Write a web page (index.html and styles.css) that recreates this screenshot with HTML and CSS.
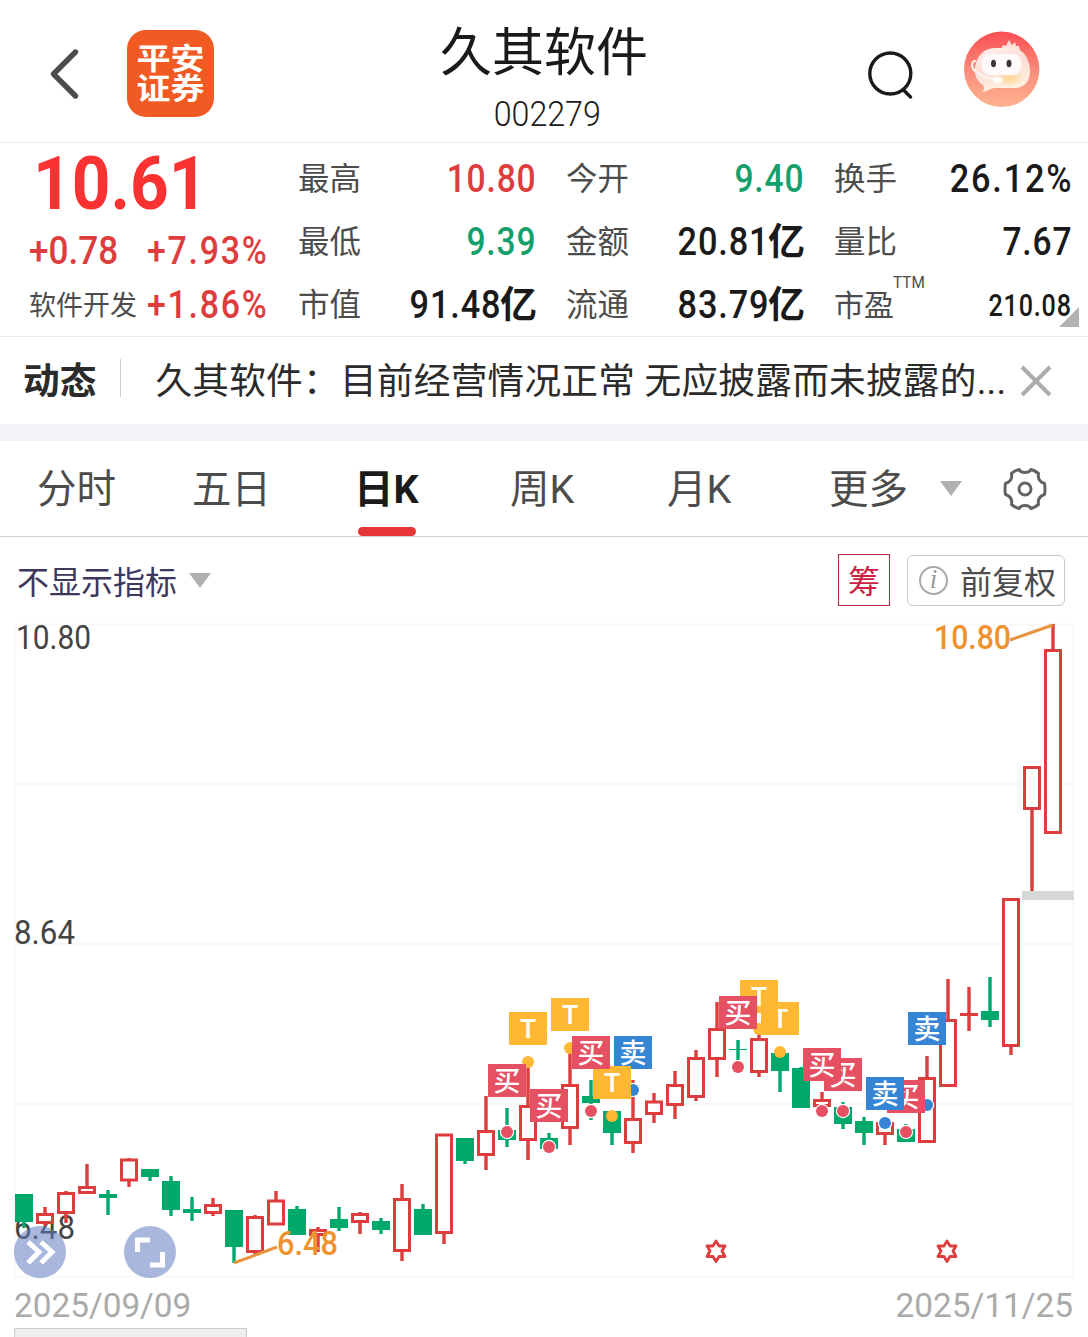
FILE: index.html
```html
<!DOCTYPE html>
<html lang="zh-CN">
<head>
    <meta charset="UTF-8">
    <meta name="viewport" content="width=device-width, initial-scale=1.0">
    <title>久其软件 002279</title>
    <link rel="stylesheet" href="styles.css">
</head>
<body>
    <header class="header">
        <div class="header-left">
            <svg class="back" width="32" height="54" viewBox="0 0 32 54">
                <path d="M27.500 5 L5.500 27 L27.500 49" fill="none" stroke="#4c4c4c" stroke-width="5.4" stroke-linecap="round" stroke-linejoin="round"/>
            </svg>
            <div class="logo"><span>平安</span><span>证券</span></div>
        </div>
        <div class="title">
            <h1>久其软件</h1>
            <div class="code"><span class="num">002279</span></div>
        </div>
        <div class="header-right">
            <svg class="search" width="48" height="50" viewBox="0 0 48 50">
                <circle cx="24.3" cy="22.5" r="20.5" fill="none" stroke="#1a1a1a" stroke-width="3.4"/>
                <path d="M38 39.500 L44.500 46" stroke="#1a1a1a" stroke-width="3.4" stroke-linecap="round"/>
            </svg>
            <svg class="robot" width="76" height="76" viewBox="0 0 76 76">
                <defs>
                    <linearGradient id="bg" x1="0" y1="0" x2="0" y2="1">
                        <stop offset="0" stop-color="#fa4e54"/>
                        <stop offset=".55" stop-color="#fa8f7c"/>
                        <stop offset="1" stop-color="#ffb391"/>
                    </linearGradient>
                    <linearGradient id="head" x1="0" y1="0" x2=".3" y2="1">
                        <stop offset="0" stop-color="#fff0ed"/>
                        <stop offset=".5" stop-color="#fddcd5"/>
                        <stop offset="1" stop-color="#fff1e2"/>
                    </linearGradient>
                    <radialGradient id="glow">
                        <stop offset="0" stop-color="#ffd68f"/>
                        <stop offset="1" stop-color="#ffd68f" stop-opacity="0"/>
                    </radialGradient>
                </defs>
                <circle cx="37.700" cy="38.300" r="37.700" fill="url(#bg)"/>
                <path d="M37 18 L39 14 L42 15 L45 9 L48 14 L51 11 L52 15 L55 15 L56 20Z" fill="#ffe0da"/>
                <path d="M30 17 H48 C59 17 66 28 66 40 C66 51 60 57 50 57 H31 C27 57 25 60 18 61 C21 58 20 56 19 54 C13 50 10 44 11 36 C13 25 19 18 30 17Z" fill="url(#head)"/>
                <ellipse cx="46" cy="47" rx="15" ry="9" fill="url(#glow)"/>
                <rect x="17.500" y="23" width="40" height="21" rx="9" fill="#fffafa"/>
                <ellipse cx="29.500" cy="32.500" rx="2.5" ry="3.8" fill="#3d3333"/>
                <ellipse cx="45" cy="32.500" rx="2.5" ry="3.8" fill="#3d3333"/>
                <path d="M12 30 C7 29 7 37 11 40 C16 45 24 48 34 49" fill="none" stroke="#fff3ee" stroke-width="2"/>
                <rect x="29" y="46.500" width="9" height="5" rx="2.5" fill="#fff"/>
            </svg>
        </div>
    </header>

    <section class="quote">
        <div class="price-box">
            <div class="price"><span class="num">10.61</span></div>
            <div class="change"><span class="num">+0.78</span><span class="num pct">+7.93%</span></div>
            <div class="sector"><span class="sector-name">软件开发</span><span class="num pct">+1.86%</span></div>
        </div>
        <div class="stats">
            <div class="stat"><label>最高</label><b class="num up">10.80</b></div>
            <div class="stat"><label>今开</label><b class="num down">9.40</b></div>
            <div class="stat"><label>换手</label><b class="num pct">26.12%</b></div>
            <div class="stat"><label>最低</label><b class="num down">9.39</b></div>
            <div class="stat"><label>金额</label><span class="val"><b class="num">20.81</b><i>亿</i></span></div>
            <div class="stat"><label>量比</label><b class="num">7.67</b></div>
            <div class="stat"><label>市值</label><span class="val"><b class="num">91.48</b><i>亿</i></span></div>
            <div class="stat"><label>流通</label><span class="val"><b class="num">83.79</b><i>亿</i></span></div>
            <div class="stat"><label class="pe">市盈<sup>TTM</sup></label><b class="num small">210.08</b></div>
        </div>
        <span class="corner"></span>
    </section>

    <section class="news">
        <strong>动态</strong>
        <span class="divider"></span>
        <p>久其软件：目前经营情况正常 无应披露而未披露的...</p>
        <svg width="32" height="32" viewBox="0 0 32 32">
            <path d="M2 2 L30 30 M30 2 L2 30" stroke="#acacac" stroke-width="4"/>
        </svg>
    </section>

    <nav class="tabs">
        <a>分时</a>
        <a>五日</a>
        <a class="active">日K</a>
        <a>周K</a>
        <a>月K</a>
        <a class="more">更多</a>
        <span class="arrow"></span>
        <svg class="gear" width="44" height="44" viewBox="-22 -22 44 44">
            <path d="M-6 -19.500 Q-4.500 -16.500 0 -16.500 Q4.500 -16.500 6 -19.500 Q10 -18.500 13.500 -15.500 Q12 -8 19.500 -5.500 Q20.500 0 19.500 5.500 Q12 8 13.500 15.500 Q10 18.500 6 19.500 Q4.500 16.500 0 16.500 Q-4.500 16.500 -6 19.500 Q-10 18.500 -13.500 15.500 Q-12 8 -19.500 5.500 Q-20.500 0 -19.500 -5.500 Q-12 -8 -13.500 -15.500 Q-10 -18.500 -6 -19.500Z" fill="none" stroke="#636363" stroke-width="3" stroke-linejoin="round"/>
            <circle r="6" fill="none" stroke="#636363" stroke-width="3"/>
        </svg>
    </nav>

    <div class="toolbar">
        <span class="indicator">不显示指标</span>
        <span class="arrow"></span>
        <span class="chip">筹</span>
        <span class="adjust"><i class="info">i</i>前复权</span>
    </div>

    <svg class="chart" id="chart" width="1088" height="660" viewBox="0 620 1088 660">
        <path class="grid" d="M15 624.500 H1073 M15 784 H1073 M15 944 H1073 M15 1104 H1073 M15 1277 H1073 M15 624 V1277 M1073 624 V1277"/>
        <text class="axis" x="16" y="649" textLength="75" lengthAdjust="spacingAndGlyphs">10.80</text>
        <text class="axis" x="14" y="944" textLength="61" lengthAdjust="spacingAndGlyphs">8.64</text>
        <text class="axis" x="14" y="1239" textLength="61" lengthAdjust="spacingAndGlyphs">6.48</text>
        <g id="candles"></g>
        <rect x="1022" y="891" width="52" height="9" fill="#d8d8d8"/>
        <g id="marks"></g>
        <path class="leader" d="M1010 640 L1053 625 M234 1263 L277 1247"/>
        <text class="axis peak" x="934" y="649" textLength="77" lengthAdjust="spacingAndGlyphs">10.80</text>
        <text class="axis peak" x="277" y="1255" textLength="61" lengthAdjust="spacingAndGlyphs">6.48</text>
        <g class="star">
            <path id="star" d="M716 1241 L719 1246 L725 1246 L722 1251 L725 1256.500 L719 1256.500 L716 1261.500 L713 1256.500 L707 1256.500 L710 1251 L707 1246 L713 1246Z"/>
            <use href="#star" x="231"/>
        </g>
        <circle class="btn" cx="40" cy="1252" r="26"/>
        <path class="btn-icon" d="M28 1242 L39 1252 L28 1263 M41 1242 L52 1252 L41 1263"/>
        <circle class="btn" cx="150" cy="1252" r="26"/>
        <path class="btn-icon" d="M150 1240 H137.500 V1252 M150 1265 H162.500 V1252"/>
    </svg>

    <div class="dates">
        <span class="num">2025/09/09</span>
        <span class="num">2025/11/25</span>
    </div>
    <div class="bottom-box"></div>

    <script>
        // [color, high, body top, body bottom, low]
        const candles = [
            ['g', 1194, 1194, 1222, 1228], ['r', 1207, 1213, 1224, 1226], ['r', 1191, 1192, 1214, 1223],
            ['r', 1164, 1186, 1194, 1194], ['g', 1190, 1194, 1198, 1215], ['r', 1158, 1158.5, 1181.5, 1187],
            ['g', 1169, 1169, 1177, 1181], ['g', 1176, 1181, 1210, 1216], ['g', 1197, 1209, 1213, 1221],
            ['r', 1198, 1204, 1214, 1216], ['g', 1210, 1210, 1247, 1263], ['r', 1215, 1216, 1253, 1255],
            ['r', 1191, 1199.5, 1225.5, 1225], ['g', 1206, 1209, 1235, 1235], ['r', 1227, 1229, 1236, 1252],
            ['g', 1207, 1219, 1228, 1231], ['r', 1212, 1213, 1223, 1234], ['g', 1218, 1221, 1230, 1234],
            ['r', 1184, 1198, 1252, 1261], ['g', 1204, 1209, 1235, 1235], ['r', 1134, 1133.5, 1234, 1244],
            ['g', 1138, 1138, 1161, 1164], ['r', 1096, 1130, 1156, 1170], ['g', 1108, 1130, 1140, 1147],
            ['r', 1065, 1105, 1141, 1160], ['g', 1133, 1138, 1149, 1152], ['r', 1053, 1084, 1129, 1145],
            ['g', 1080, 1096, 1103, 1120], ['g', 1111, 1111, 1133, 1145], ['r', 1080, 1118, 1144, 1153],
            ['r', 1093, 1100.5, 1115, 1123], ['r', 1071, 1084, 1106, 1119], ['r', 1050, 1057, 1098, 1101],
            ['r', 1002, 1028, 1060, 1077], ['g', 1040, 1049, 1050, 1061], ['r', 1030, 1038, 1073, 1077],
            ['g', 1053, 1053, 1071, 1092], ['g', 1067, 1068, 1108, 1108], ['r', 1092, 1099, 1107, 1108],
            ['g', 1102, 1107, 1124, 1129], ['g', 1117, 1121, 1133, 1145], ['r', 1122, 1122, 1135, 1145],
            ['g', 1124, 1129, 1142, 1142], ['r', 1056, 1077, 1143, 1142], ['r', 979, 1019, 1087, 1086],
            ['r', 987, 1013, 1016, 1031], ['g', 977, 1011, 1020, 1027], ['r', 900, 898, 1047, 1055],
            ['r', 768, 766, 810, 891], ['r', 624, 649, 834, 833]
        ];

        // [candle index, type, y]
        const dots = [
            [24, 't', 1062], [26, 't', 1048], [23, 'b', 1132], [25, 'b', 1147], [27, 'b', 1111],
            [28, 't', 1116], [29, 's', 1090], [34, 'b', 1067], [35, 't', 1029], [36, 't', 1052],
            [38, 'b', 1111], [39, 'b', 1111], [41, 's', 1123], [42, 'b', 1132], [43, 's', 1105]
        ];

        // [candle index, type, top], newest first so older flags stay on top
        const flags = [
            [43, 's', 1012], [42, 'b', 1080], [41, 's', 1077], [39, 'b', 1058], [38, 'b', 1048],
            [36, 't', 1002], [35, 't', 980], [34, 'b', 996], [29, 's', 1036], [28, 't', 1066],
            [27, 'b', 1036], [26, 't', 998], [25, 'b', 1089], [24, 't', 1012], [23, 'b', 1064]
        ];

        const colors = { r: '#dd3d3d', g: '#00a86b', b: '#e55063', s: '#3684d4', t: '#ffb833' };
        const names = { b: '买', s: '卖', t: 'T' };
        const xOf = i => 24 + i * 21;

        document.getElementById('candles').innerHTML = candles.map(([c, high, top, bottom, low], i) => {
            const x = xOf(i);
            const line = `<path d="M${x} ${high} V${low}" stroke="${colors[c]}" stroke-width="3.4"/>`;
            const h = bottom - top;
            if (c === 'g' || h < 4) {
                return line + `<rect x="${x - 9}" y="${top}" width="18" height="${h}" fill="${colors[c]}"/>`;
            }
            return line + `<rect x="${x - 7.5}" y="${top + 1.5}" width="15" height="${h - 3}" fill="#fff" stroke="${colors[c]}" stroke-width="3"/>`;
        }).join('');

        document.getElementById('marks').innerHTML =
            dots.map(([i, t, y]) => `<circle cx="${xOf(i)}" cy="${y}" r="6" fill="${colors[t]}" class="dot dot-${t}"/>`).join('') +
            flags.map(([i, t, y]) => {
                const x = xOf(i);
                return `<rect x="${x - 19}" y="${y}" width="38" height="33" fill="${colors[t]}"/>` +
                    `<text class="flag flag-${t}" x="${x}" y="${y + (t === 't' ? 25.5 : 26.5)}">${names[t]}</text>`;
            }).join('');
    </script>
</body>
</html>
```
FILE: styles.css
```css
* {
    box-sizing: border-box;
}

body {
    margin: 0;
    width: 1088px;
    height: 1337px;
    overflow: hidden;
    background: #fff;
    color: #1a1a1a;
    font-family: Roboto, "Noto Sans CJK SC", sans-serif;
}

h1, p {
    margin: 0;
    font-weight: 400;
}

i {
    font-style: normal;
}

.num {
    display: inline-block;
    font-family: Roboto, sans-serif;
    font-weight: 500;
    transform: scaleX(.9);
    transform-origin: right center;
    white-space: nowrap;
}

/* header */
.header {
    display: grid;
    grid-template-columns: 1fr 300px 1fr;
    height: 143px;
    border-bottom: 1px solid #ebebeb;
}

.header-left {
    display: flex;
    padding: 30px 0 0 48px;
}

.back {
    margin-top: 17px;
}

.logo {
    display: flex;
    flex-direction: column;
    align-items: center;
    justify-content: center;
    width: 87px;
    height: 87px;
    margin-left: 47px;
    border-radius: 19px;
    background: #f15a22;
    color: #fff;
}

.logo span {
    height: 30px;
    font-size: 34px;
    line-height: 30px;
    font-weight: 700;
    transform: scaleY(.86);
}

.title {
    text-align: center;
}

.title h1 {
    margin-top: 21px;
    font-size: 52px;
    line-height: 66px;
}

.code {
    margin-top: 7px;
    padding-left: 6px;
    font-size: 35px;
    line-height: 42px;
}

.code .num {
    font-weight: 300;
    transform: scaleX(.92);
    transform-origin: center;
}

.header-right {
    display: flex;
    justify-content: flex-end;
    gap: 50px;
    padding: 31px 48px 0 0;
}

.search {
    margin-top: 20px;
}

/* quote */
.quote {
    position: relative;
    display: flex;
    height: 194px;
    border-bottom: 1px solid #ebebeb;
}

.price-box {
    width: 298px;
    padding-left: 29px;
    color: #dd3d3d;
}

.price-box .num {
    transform-origin: left center;
}

.price {
    height: 81px;
    padding-left: 4px;
    color: #fa3232;
    font-size: 75px;
    line-height: 80px;
}

.price .num {
    font-weight: 700;
}

.change, .sector {
    display: flex;
    height: 54px;
    font-size: 39px;
    line-height: 54px;
}

.change .num:first-child {
    width: 118px;
}

.price-box .pct {
    transform: scaleX(.87);
    letter-spacing: 2px;
}

.sector-name {
    width: 118px;
    color: #4c4c4c;
    font-size: 27px;
    line-height: 57px;
}

.stats {
    display: grid;
    grid-template-columns: repeat(3, 238px);
    grid-auto-rows: 63px;
    column-gap: 30px;
    padding-top: 5px;
}

.stat {
    display: flex;
    align-items: center;
    justify-content: space-between;
    font-size: 39px;
    line-height: 63px;
}

.stat .num {
    transform: scaleX(.86);
    letter-spacing: 1px;
}

.stat .pct {
    margin-right: -1px;
    transform: scaleX(.88);
    letter-spacing: 2px;
}

.stat label {
    color: #4c4c4c;
    font-size: 31.500px;
}

.val {
    display: flex;
}

.val .num {
    transform: scaleX(.88);
}

.val i {
    width: 36px;
    margin-top: -3px;
    margin-left: -1px;
    font-family: "Noto Sans CJK SC", sans-serif;
    font-size: 37px;
    font-weight: 700;
}

.pe {
    position: relative;
}

.stat .pe {
    font-size: 30px;
}

.pe sup {
    position: absolute;
    left: 59px;
    top: -2px;
    font-size: 17px;
    line-height: 20px;
    transform: scaleX(.9);
    transform-origin: left;
}

.stat .small {
    font-size: 31px;
    transform: scaleX(.81);
}

.up {
    color: #dd3d3d;
}

.down {
    color: #14a06c;
}

.corner {
    position: absolute;
    right: 9px;
    bottom: 9px;
    border-left: 20px solid transparent;
    border-bottom: 20px solid #b2b2b2;
}

/* news */
.news {
    display: flex;
    align-items: center;
    height: 104px;
    padding: 0 36px 0 23px;
    border-bottom: 17px solid #f3f4f8;
    color: #2b2b2b;
    font-size: 36.700px;
    line-height: 60px;
}

.news strong {
    margin-top: 2px;
}

.divider {
    width: 1px;
    height: 38px;
    margin: 0 34px 6px 24px;
    background: #ccc;
}

.news p {
    flex: 1;
    margin-top: 2px;
    letter-spacing: .22px;
    white-space: nowrap;
}

/* tabs */
.tabs {
    display: flex;
    height: 96px;
    padding-left: 37px;
    border-bottom: 1px solid #d0d0d0;
    color: #4c4c4c;
    font-size: 39.500px;
    line-height: 97px;
}

.tabs a {
    position: relative;
    width: 157px;
}

.tabs a:nth-child(1) {
    width: 155px;
}

.tabs a:nth-child(2) {
    width: 162px;
}

.tabs a:nth-child(3) {
    width: 156px;
}

.tabs a:nth-child(5) {
    width: 162px;
}

.tabs .active {
    color: #1a1a1a;
    font-weight: 700;
}

.active::after {
    content: "";
    position: absolute;
    left: 4px;
    bottom: 0;
    width: 58px;
    height: 9px;
    border-radius: 5px;
    background: #e63535;
}

.tabs .more {
    width: 80px;
}

.arrow {
    width: 0;
    height: 0;
    border: 11.500px solid transparent;
    border-top: 15px solid #b0b0b0;
    border-bottom: 0;
}

.tabs .arrow {
    margin: 40px 41px 0 31px;
}

.gear {
    margin-top: 26px;
}

/* toolbar */
.toolbar {
    display: flex;
    height: 83px;
    padding: 17px 23px 0 17px;
    font-size: 32px;
    line-height: 54px;
}

.indicator {
    margin-top: 2px;
    color: #3d375c;
}

.toolbar .arrow {
    margin: 19px auto 0 12px;
}

.chip {
    width: 52px;
    height: 52px;
    margin-right: 17px;
    border: 1px solid #b02c42;
    color: #cc2244;
    text-align: center;
}

.adjust {
    display: flex;
    width: 158px;
    height: 51px;
    margin-top: 1px;
    padding-left: 11px;
    border: 1px solid #c8c8c8;
    border-radius: 6px;
    color: #4c4c4c;
    line-height: 54px;
}

.info {
    width: 29px;
    height: 29px;
    margin: 10px 12px 0 0;
    border: 2px solid #aaa;
    border-radius: 50%;
    color: #999;
    font: italic 400 27px/23px "Liberation Serif", serif;
    text-align: center;
}

/* chart */
.chart {
    display: block;
    overflow: visible;
    font-family: Roboto, "Noto Sans CJK SC", sans-serif;
}

.grid {
    fill: none;
    stroke: #f8f8f8;
    stroke-width: 2;
}

.axis {
    fill: #444;
    font-size: 34px;
}

.peak {
    fill: #ee922f;
    font-weight: 500;
}

.leader {
    fill: none;
    stroke: #e89540;
    stroke-width: 3;
}

.star {
    fill: none;
    stroke: #dd3d3d;
    stroke-width: 2.8;
    stroke-linejoin: round;
}

.dot-b, .dot-s {
    stroke: #fff;
    stroke-width: 2.4;
    paint-order: stroke;
}

.flag {
    fill: #fff;
    font-size: 27px;
    font-weight: 500;
    text-anchor: middle;
}

.flag-t {
    font-family: Inter, sans-serif;
    font-size: 26px;
    font-weight: 600;
}

.btn {
    fill: #627cc1;
    fill-opacity: .55;
}

.btn-icon {
    fill: none;
    stroke: #fff;
    stroke-width: 5;
}

/* dates */
.dates {
    display: flex;
    justify-content: space-between;
    height: 48px;
    padding: 0 15px 0 14px;
    color: #aaa;
    font-size: 34px;
    line-height: 51px;
}

.dates .num {
    font-weight: 400;
    transform: scaleX(.98);
}

.dates .num:first-child {
    transform-origin: left center;
}

.bottom-box {
    width: 233px;
    height: 12px;
    margin-left: 14px;
    border: 1px solid #ccc;
    background: #efefef;
}
```
